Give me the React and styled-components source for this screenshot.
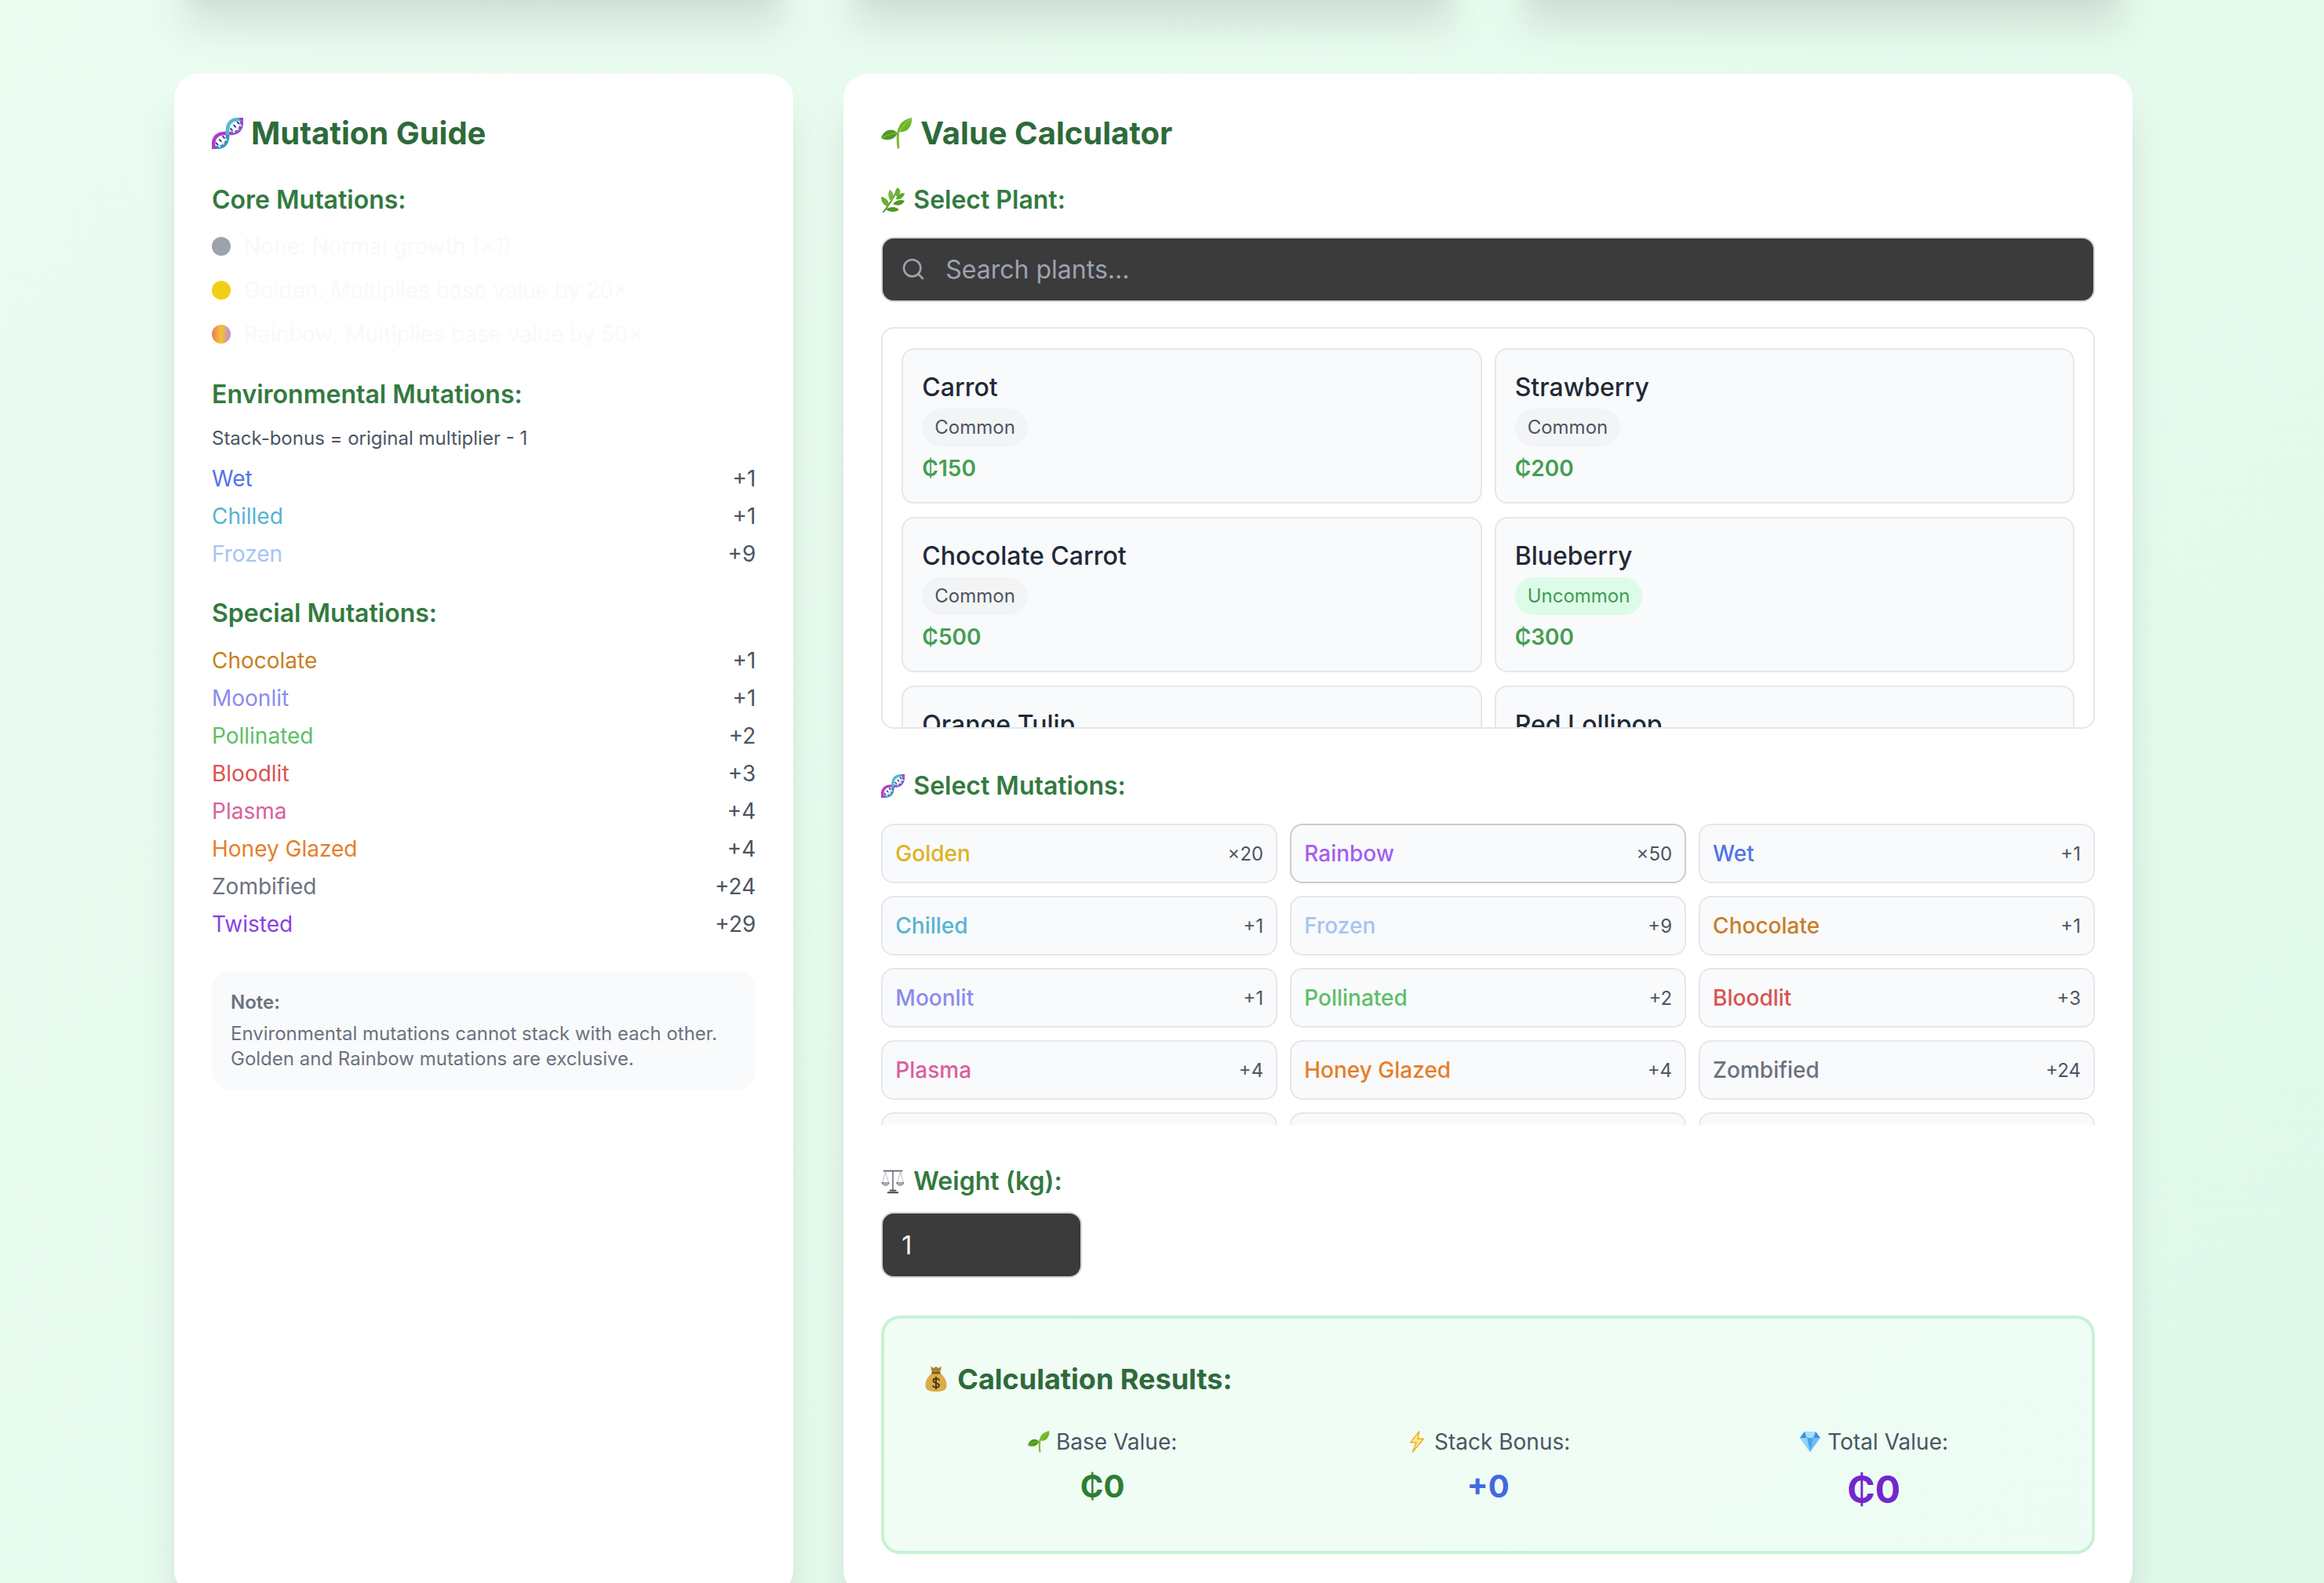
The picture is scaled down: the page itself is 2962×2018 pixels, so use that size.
import React from 'react';
import styled, { createGlobalStyle } from 'styled-components';
import { Search } from 'lucide-react';

const Global = createGlobalStyle`
  html, body { margin: 0; padding: 0; height: 2018px; overflow: hidden; }
  body {
    font-family: Inter, "Noto Sans", sans-serif;
    background: linear-gradient(135deg, #ebfcf1 0%, #e5faed 59%, #def8e9 100%);
  }
  * { box-sizing: border-box; }
`;

const Page = styled.div`
  width: 2496px;
  margin-left: 222px;
`;

const TopRow = styled.div`
  display: grid;
  grid-template-columns: repeat(3, 1fr);
  gap: 64px;
  height: 60px;
  margin-top: -62px;
  margin-bottom: 96px;
`;

const shadow = '0 40px 50px -8px rgba(0,0,0,.12), 0 20px 20px -10px rgba(0,0,0,.04)';

const TopCard = styled.div`
  background: #fff;
  border-radius: 32px;
  box-shadow: ${shadow};
`;

const Columns = styled.div`
  display: grid;
  grid-template-columns: repeat(3, 1fr);
  gap: 64px;
`;

const Card = styled.section`
  background: #fff;
  border-radius: 32px;
  padding: 48px 48px 53px;
  box-shadow: ${shadow};
  grid-column: span ${p => p.$span || 1};
`;

const Title = styled.h2`
  display: flex;
  align-items: center;
  gap: 10px;
  height: 56px;
  margin: 0 0 33px;
  font-size: 40px;
  line-height: 56px;
  font-weight: 700;
  color: #2e6a3a;
`;

const Heading = styled.h3`
  display: flex;
  align-items: center;
  gap: 11px;
  height: 48px;
  margin: 0 0 ${p => p.$mb ?? 14}px;
  font-size: 32px;
  line-height: 48px;
  font-weight: 600;
  color: #337a3f;
`;

const CoreList = styled.ul`
  list-style: none;
  margin: 0 0 32px;
  padding: 0;
  display: flex;
  flex-direction: column;
  gap: 14px;
`;

const CoreRow = styled.li`
  display: flex;
  align-items: center;
  gap: 17px;
  height: 42px;
  font-size: 28px;
  color: #f9f9f9;
`;

const Dot = styled.span`
  width: 24px;
  height: 24px;
  border-radius: 50%;
  background: ${p => p.$bg};
  flex: none;
`;

const Hint = styled.p`
  margin: 0 0 12px;
  font-size: 24px;
  line-height: 36px;
  color: #4b5563;
`;

const GuideList = styled.div`
  display: flex;
  flex-direction: column;
  gap: 6px;
  margin-bottom: ${p => p.$mb || 0}px;
`;

const GuideRow = styled.div`
  display: flex;
  justify-content: space-between;
  align-items: center;
  height: 42px;
  font-size: 28px;
`;

const GuideName = styled.span`
  color: ${p => p.$color};
`;

const GuideValue = styled.span`
  color: #4b5563;
`;

const Note = styled.div`
  background: #f9fafb;
  border-radius: 24px;
  padding: 24px;
  height: 152px;
  font-size: 24px;
  line-height: 32px;
  color: #6b7280;
`;

const NoteTitle = styled.div`
  font-weight: 600;
  margin-bottom: 8px;
`;

const SearchWrap = styled.div`
  position: relative;
  margin-bottom: 32px;
`;

const SearchIcon = styled(Search)`
  position: absolute;
  left: 25px;
  top: 25px;
  width: 32px;
  height: 32px;
  color: #9ca3af;
  stroke-width: 2;
`;

const DarkInput = styled.input`
  display: block;
  width: ${p => p.$width || '100%'};
  height: ${p => p.$height || 83}px;
  padding: ${p => (p.$icon ? '0 24px 0 80px' : '0 24px')};
  border: 2px solid #d1d5db;
  border-radius: 16px;
  background: #3b3b3b;
  color: #fff;
  font: 400 32px Inter, sans-serif;
  outline: none;
  &::placeholder { color: #9ca3af; opacity: 1; }
`;

const PlantBox = styled.div`
  height: 512px;
  overflow: hidden;
  border: 2px solid #e5e7eb;
  border-radius: 16px;
  padding: 25px 24px 24px;
  margin-bottom: 49px;
`;

const PlantGrid = styled.div`
  display: grid;
  grid-template-columns: 1fr 1fr;
  gap: 17px 16px;
`;

const Plant = styled.div`
  height: 198px;
  padding: 24px;
  background: #f9fafb;
  border: 2px solid #e5e7eb;
  border-radius: 16px;
`;

const PlantName = styled.div`
  font-size: 32px;
  line-height: 48px;
  font-weight: 500;
  color: #1f2937;
`;

const Badge = styled.span`
  display: inline-block;
  margin-top: 3px;
  padding: 8px 16px;
  height: 48px;
  border-radius: 24px;
  font-size: 24px;
  line-height: 32px;
  background: ${p => (p.$uncommon ? '#dcfce7' : '#f3f4f6')};
  color: ${p => (p.$uncommon ? '#3f9a4f' : '#4b5563')};
`;

const Price = styled.div`
  margin-top: 7px;
  font-size: 28px;
  line-height: 42px;
  font-weight: 600;
  color: #459e52;
`;

const MutationGrid = styled.div`
  display: grid;
  grid-template-columns: repeat(3, 1fr);
  gap: 16px;
  height: 384px;
  overflow: hidden;
  margin-bottom: 48px;
`;

const MutationButton = styled.button`
  display: flex;
  justify-content: space-between;
  align-items: center;
  height: 76px;
  padding: 0 16px;
  background: #f9fafb;
  border: 2px solid ${p => (p.$selected ? '#c9ccd6' : '#e5e7eb')};
  border-radius: 16px;
  font-family: inherit;
`;

const MutationName = styled.span`
  font-size: 28px;
  font-weight: 500;
  color: ${p => p.$color};
`;

const MutationValue = styled.span`
  font-size: 24px;
  color: #4b5563;
`;

const Results = styled.div`
  margin-top: 48px;
  height: 304px;
  padding: 50px 48px 0;
  background: linear-gradient(135deg, #f1fdf5, #edfdf4);
  border: 4px solid #c6f2d3;
  border-radius: 24px;
`;

const ResultsTitle = styled.h3`
  display: flex;
  align-items: center;
  gap: 13px;
  margin: 0 0 32px;
  padding-left: 4px;
  font-size: 36px;
  line-height: 54px;
  font-weight: 700;
  color: #2e6a3a;
`;

const ResultGrid = styled.div`
  display: grid;
  grid-template-columns: repeat(3, 1fr);
  gap: 32px;
`;

const ResultCell = styled.div`
  display: flex;
  flex-direction: column;
  align-items: center;
`;

const ResultLabel = styled.div`
  display: flex;
  align-items: center;
  gap: 8px;
  font-size: 28px;
  line-height: 42px;
  color: #4b5563;
`;

const ResultValue = styled.div`
  margin-top: ${p => p.$mt}px;
  font-size: ${p => p.$size}px;
  line-height: 1.5;
  font-weight: 700;
  color: ${p => p.$color};
`;

/* Emoji drawings */
const Dna = ({ size }) => (
  <svg width={size} height={size} viewBox="0 0 40 40" fill="none">
    <g transform="rotate(-45 20 20) translate(20 20)" strokeLinecap="round">
      <path d="M-25 0 Q-13 15 0 0" stroke="#3f8fc0" strokeWidth="4.5" />
      <path d="M0 0 Q13 15 25 0" stroke="#8a55c8" strokeWidth="4.5" />
      <path d="M-19 -6 V6 M-13 -7 V7 M-7 -6 V6 M7 -6 V6 M13 -7 V7 M19 -6 V6" stroke="#dfe6f5" strokeWidth="2" strokeLinecap="butt" />
      <path d="M-13 -2 V2 M13 -2 V2 M-19 -2 V2 M19 -2 V2 M-7 -2 V2 M7 -2 V2" stroke="#34406e" strokeWidth="2" strokeLinecap="butt" />
      <path d="M-25 0 Q-13 -15 0 0" stroke="#b23cc6" strokeWidth="4.5" />
      <path d="M0 0 Q13 -15 25 0" stroke="#58b6d8" strokeWidth="4.5" />
      <path d="M25 -1 L27 1" stroke="#b23cc6" strokeWidth="4" />
      <path d="M-27 -1 L-25 1" stroke="#b23cc6" strokeWidth="4" />
    </g>
  </svg>
);

const Seedling = ({ size }) => (
  <svg width={size} height={size} viewBox="0 0 40 40" fill="none">
    <path d="M22 38 C21 30 20 22 23 14" stroke="#86b83a" strokeWidth="3" strokeLinecap="round" />
    <path d="M39 0 C40 10 34 20 23 18 C20 9 29 2 39 0Z" fill="#6fb52c" />
    <path d="M0 26 C3 15 15 12 21 20 C16 29 7 30 0 26Z" fill="#4f9a22" />
    <path d="M38 1 C32 6 28 10 24 17" stroke="#a6d65a" strokeWidth="1" />
    <path d="M1 26 C8 22 14 20 20 20" stroke="#8cc63f" strokeWidth="1" />
  </svg>
);

const Herb = ({ size }) => (
  <svg width={size} height={size * 1.07} viewBox="0 0 30 32" fill="none">
    <path d="M3 31 C9 24 15 15 21 2" stroke="#4f8f28" strokeWidth="1.8" strokeLinecap="round" />
    <path d="M21 0 C26 3 25 9 20 12 C17 8 17 4 21 0Z" fill="#6cae32" />
    <path d="M30 7 C29 13 24 16 19 15 C20 10 24 7 30 7Z" fill="#5fa62c" />
    <path d="M11 3 C16 6 17 12 14 18 C9 15 8 8 11 3Z" fill="#78b83c" />
    <path d="M30 17 C27 23 21 24 15 21 C19 16 25 15 30 17Z" fill="#4f9a26" />
    <path d="M0 12 C6 12 11 18 10 24 C4 24 0 19 0 12Z" fill="#6cae32" />
    <path d="M23 28 C19 32 11 32 6 28 C11 24 18 24 23 28Z" fill="#4f9a26" />
  </svg>
);

const Scales = ({ size }) => (
  <svg width={size} height={size * 1.07} viewBox="0 0 32 36" fill="none" stroke="#5f6670" strokeLinecap="round">
    <path d="M16 3 V31" strokeWidth="2" stroke="#7d848c" />
    <path d="M3 3 H29" strokeWidth="1.8" />
    <path d="M9 34 H23 M12 31 H20" strokeWidth="2.2" stroke="#3e444c" />
    <path d="M5 4 L1 20 M5 4 L10 20 M27 4 L22 20 M27 4 L31 20" strokeWidth="0.8" stroke="#9aa0a8" />
    <path d="M0.5 20 H10.5 C10 25 1 25 0.5 20Z M21.5 20 H31.5 C31 25 22 25 21.5 20Z" fill="#b9bec5" strokeWidth="1" />
  </svg>
);

const MoneyBag = ({ size }) => (
  <svg width={size} height={size * 1.18} viewBox="0 0 28 33" fill="none">
    <path d="M7 1 L11 3 L14 1 L17 3 L21 1 L19 9 H9 Z" fill="#a9842f" />
    <path d="M9 9 H19 C25 14 28 20 27.5 26 C27 31 23 33 14 33 C5 33 1 31 0.5 26 C0 20 3 14 9 9Z" fill="#d9ac4a" />
    <rect x="8.5" y="8" width="11" height="2.5" fill="#7f5f1d" />
    <path d="M18 18 C16 15.5 10.5 16 10.5 19 C10.5 23 18 21.5 18 25 C18 28 12 28.5 10 26 M14 14.5 V29.5" stroke="#3d2c0d" strokeWidth="1.7" strokeLinecap="round" />
  </svg>
);

const Zap = ({ size }) => (
  <svg width={size} height={size} viewBox="0 0 24 30" fill="none">
    <path d="M15 1 L3 16 H11 L6 29 L21 11 H13 Z" fill="#fde98a" stroke="#f2a516" strokeWidth="1.4" strokeLinejoin="round" />
  </svg>
);

const Gem = ({ size }) => (
  <svg width={size} height={size} viewBox="0 0 28 28" fill="none">
    <path d="M7 1 H21 L27 9 L14 27 L1 9 Z" fill="#6cc0f5" />
    <path d="M7 1 L10 9 H1 Z M21 1 L18 9 H27 Z" fill="#3f8fe0" />
    <path d="M10 9 H18 L14 27 Z" fill="#4aa5ee" />
    <path d="M7 1 H21 L18 9 H10 Z" fill="#a6dcfb" />
    <path d="M1 9 H10 L14 27 Z" fill="#8fd3fa" />
  </svg>
);

const core = [
  ['#9ca3af', 'None: Normal growth (×1)'],
  ['#f2cf17', 'Golden: Multiplies base value by 20×'],
  ['linear-gradient(90deg, #ec7a63, #f2c52e 50%, #b78ae8)', 'Rainbow: Multiplies base value by 50×'],
];

const colors = {
  Golden: '#e0b11f', Rainbow: '#a45ff0', Wet: '#4f74e8', Chilled: '#58b3d2', Frozen: '#a4c4f5',
  Chocolate: '#c97f26', Moonlit: '#8a8cee', Pollinated: '#5cbf68', Bloodlit: '#d9534f',
  Plasma: '#d9609c', 'Honey Glazed': '#e67e2a', Zombified: '#6b7280', Twisted: '#8a3fe0',
};

const env = [['Wet', '+1'], ['Chilled', '+1'], ['Frozen', '+9']];
const special = [
  ['Chocolate', '+1'], ['Moonlit', '+1'], ['Pollinated', '+2'], ['Bloodlit', '+3'],
  ['Plasma', '+4'], ['Honey Glazed', '+4'], ['Zombified', '+24'], ['Twisted', '+29'],
];
/* Row five is clipped to its top edge, so the last two buttons show no text. */
const mutations = [['Golden', '×20'], ['Rainbow', '×50'], ...env, ...special, ['', ''], ['', '']];

const plants = [
  { name: 'Carrot', rarity: 'Common', price: '₵150' },
  { name: 'Strawberry', rarity: 'Common', price: '₵200' },
  { name: 'Chocolate Carrot', rarity: 'Common', price: '₵500' },
  { name: 'Blueberry', rarity: 'Uncommon', price: '₵300' },
  { name: 'Orange Tulip' },
  { name: 'Red Lollipop' },
];

const GuideRows = ({ rows, mb }) => (
  <GuideList $mb={mb}>
    {rows.map(([name, value]) => (
      <GuideRow key={name}>
        <GuideName $color={colors[name]}>{name}</GuideName>
        <GuideValue>{value}</GuideValue>
      </GuideRow>
    ))}
  </GuideList>
);

export default function App() {
  return (
    <Page>
      <Global />
      <TopRow>
        <TopCard />
        <TopCard />
        <TopCard />
      </TopRow>
      <Columns>
        <Card>
          <Title><Dna size={40} />Mutation Guide</Title>
          <Heading>Core Mutations:</Heading>
          <CoreList>
            {core.map(([bg, text]) => (
              <CoreRow key={text}><Dot $bg={bg} />{text}</CoreRow>
            ))}
          </CoreList>
          <Heading>Environmental Mutations:</Heading>
          <Hint>Stack-bonus = original multiplier - 1</Hint>
          <GuideRows rows={env} mb={31} />
          <Heading $mb={15}>Special Mutations:</Heading>
          <GuideRows rows={special} mb={39} />
          <Note>
            <NoteTitle>Note:</NoteTitle>
            Environmental mutations cannot stack with each other.<br />
            Golden and Rainbow mutations are exclusive.
          </Note>
        </Card>
        <Card $span={2}>
          <Title><Seedling size={40} />Value Calculator</Title>
          <Heading $mb={23}><Herb size={30} />Select Plant:</Heading>
          <SearchWrap>
            <DarkInput $icon placeholder="Search plants..." />
            <SearchIcon />
          </SearchWrap>
          <PlantBox>
            <PlantGrid>
              {plants.map(({ name, rarity, price }) => (
                <Plant key={name}>
                  <PlantName>{name}</PlantName>
                  {rarity && <Badge $uncommon={rarity === 'Uncommon'}>{rarity}</Badge>}
                  {price && <Price>{price}</Price>}
                </Plant>
              ))}
            </PlantGrid>
          </PlantBox>
          <Heading $mb={24}><Dna size={30} />Select Mutations:</Heading>
          <MutationGrid>
            {mutations.map(([name, value], i) => (
              <MutationButton key={i} $selected={name === 'Rainbow'}>
                <MutationName $color={colors[name]}>{name}</MutationName>
                <MutationValue>{value}</MutationValue>
              </MutationButton>
            ))}
          </MutationGrid>
          <Heading $mb={15}><Scales size={30} />Weight (kg):</Heading>
          <DarkInput $width="256px" $height={84} type="number" defaultValue="1" />
          <Results>
            <ResultsTitle><MoneyBag size={28} />Calculation Results:</ResultsTitle>
            <ResultGrid>
              <ResultCell>
                <ResultLabel><Seedling size={28} />Base Value:</ResultLabel>
                <ResultValue $mt={6} $size={40} $color="#2e7d32">₵0</ResultValue>
              </ResultCell>
              <ResultCell>
                <ResultLabel><Zap size={28} />Stack Bonus:</ResultLabel>
                <ResultValue $mt={6} $size={40} $color="#4169e1">+0</ResultValue>
              </ResultCell>
              <ResultCell>
                <ResultLabel><Gem size={28} />Total Value:</ResultLabel>
                <ResultValue $mt={4} $size={48} $color="#7326cf">₵0</ResultValue>
              </ResultCell>
            </ResultGrid>
          </Results>
        </Card>
      </Columns>
    </Page>
  );
}
